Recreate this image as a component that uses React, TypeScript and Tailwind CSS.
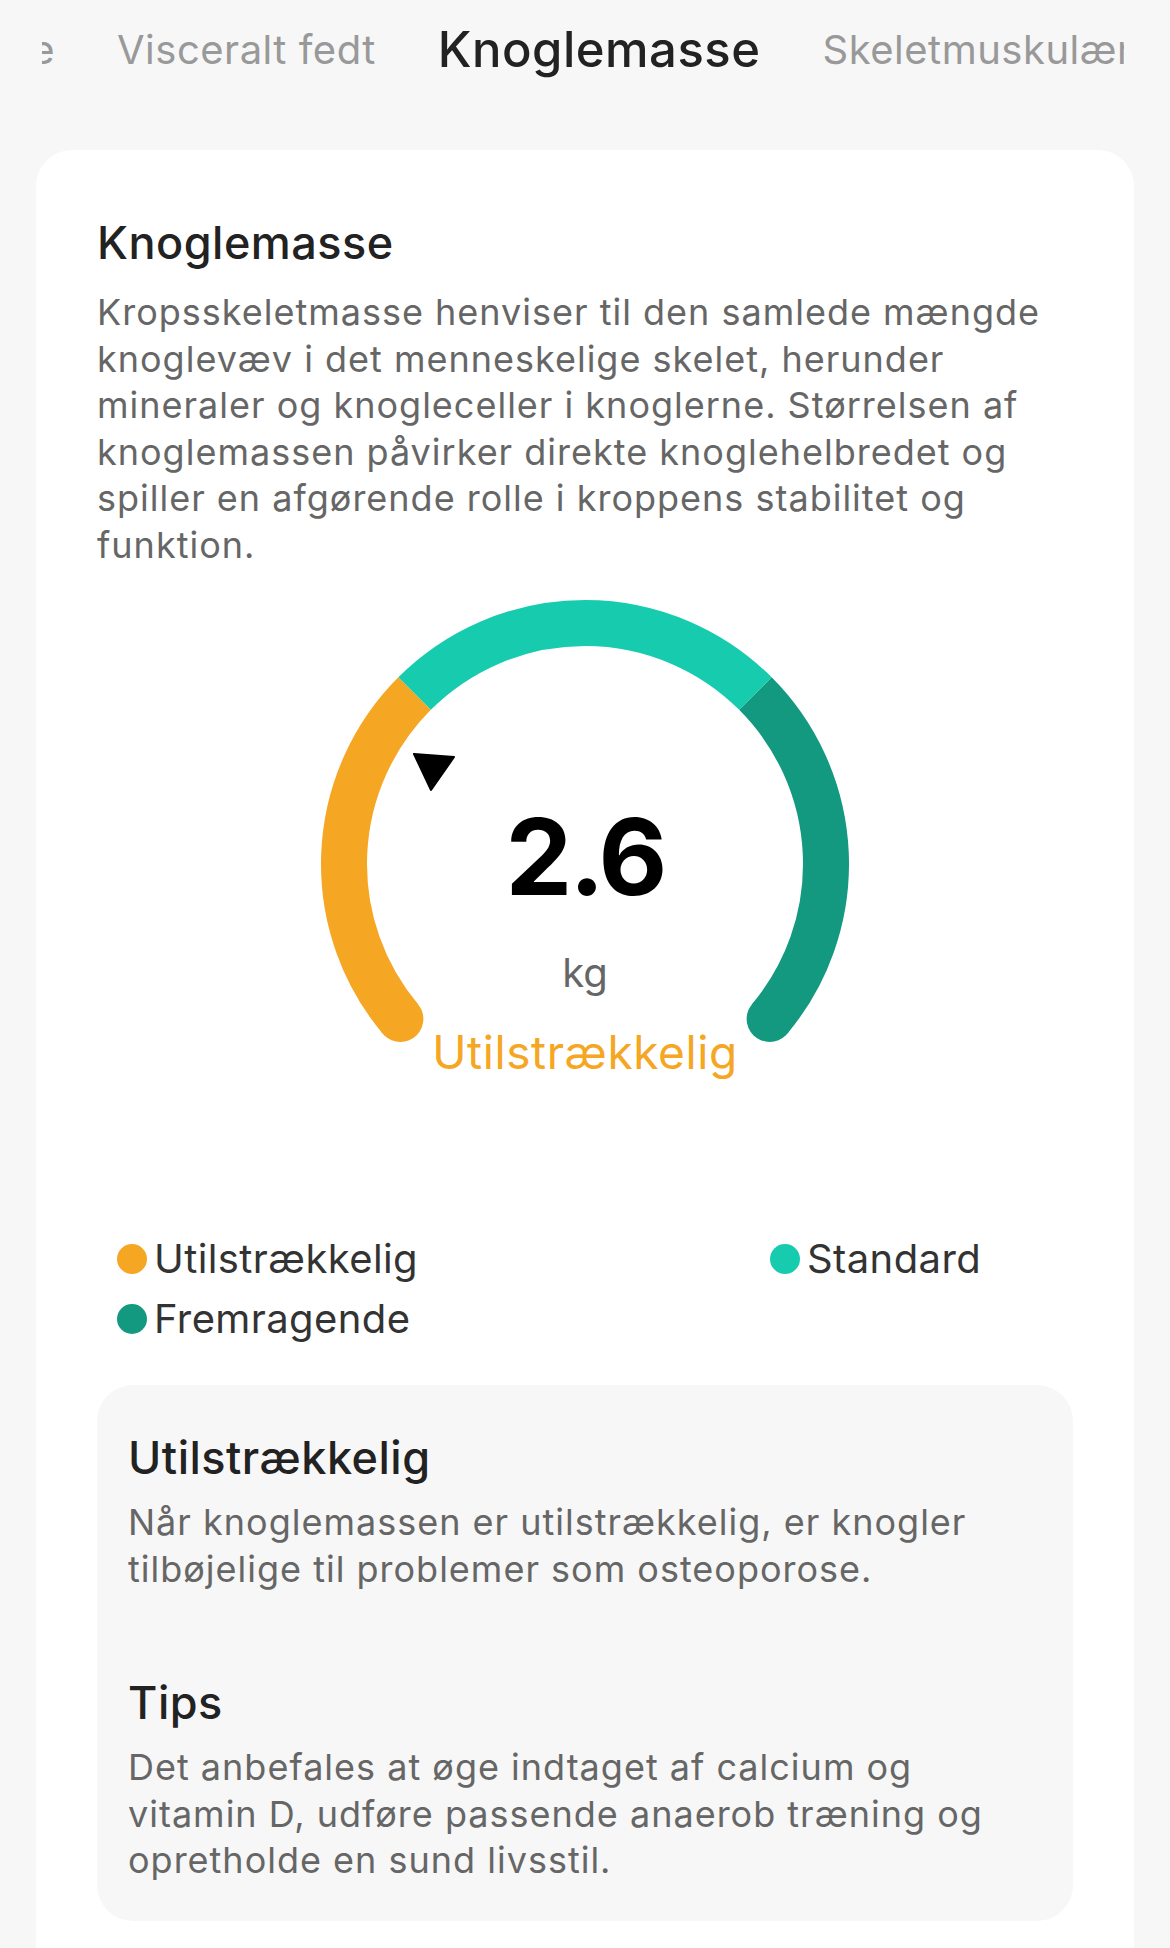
import React from 'react';

const ORANGE = '#F5A623';
const TEAL = '#17CBAE';
const DARK = '#12997F';

// gauge geometry (svg coordinates, 540x540 box)
const C = 270;
const R = 241;
const SW = 46;

function pt(deg: number) {
  const a = (deg * Math.PI) / 180;
  return { x: C + R * Math.cos(a), y: C - R * Math.sin(a) };
}

function arc(from: number, to: number) {
  const a = pt(from);
  const b = pt(to);
  const large = Math.abs(from - to) > 180 ? 1 : 0;
  return `M ${a.x} ${a.y} A ${R} ${R} 0 ${large} 1 ${b.x} ${b.y}`;
}

function Gauge() {
  const start = pt(220);
  const end = pt(-40);
  return (
    <div className="relative mx-auto mt-[26px] h-[540px] w-[540px]">
      <svg className="absolute inset-0" width="540" height="540" viewBox="0 0 540 540">
        <path d={arc(220, 135)} stroke={ORANGE} strokeWidth={SW} fill="none" />
        <path d={arc(45, -40)} stroke={DARK} strokeWidth={SW} fill="none" />
        <path d={arc(135, 45)} stroke={TEAL} strokeWidth={SW} fill="none" />
        <circle cx={start.x} cy={start.y} r={SW / 2} fill={ORANGE} />
        <circle cx={end.x} cy={end.y} r={SW / 2} fill={DARK} />
        <polygon points="99,160 139,163 116,196" fill="#000" stroke="#000" strokeWidth="2" strokeLinejoin="round" />
      </svg>
      <div className="absolute left-0 right-0 top-[205px] text-center text-[106px] font-bold leading-[116px] tracking-[-3px] text-black">
        2.6
      </div>
      <div className="absolute left-0 right-0 top-[356px] text-center text-[40px] leading-[46px] text-[#666666]">
        kg
      </div>
      <div className="absolute left-0 right-0 top-[430px] text-center text-[46px] leading-[56px] tracking-[0.6px] text-[#F5A623]">
        Utilstrækkelig
      </div>
    </div>
  );
}

function LegendItem({ color, label }: { color: string; label: string }) {
  return (
    <div className="flex h-[60px] items-center gap-[7px]">
      <span className="h-[30px] w-[30px] shrink-0 rounded-full" style={{ backgroundColor: color }} />
      <span className="text-[40px] leading-[60px] tracking-[0.4px] text-[#333333]">{label}</span>
    </div>
  );
}

export default function App() {
  return (
    <div
      className="min-h-[1948px] w-[1170px] overflow-hidden bg-[#f7f7f7]"
      style={{ fontFamily: 'Inter, "Noto Sans", sans-serif' }}
    >
      {/* tab strip */}
      <div className="ml-[42px] mr-[46px] h-[100px] overflow-hidden">
        <div className="ml-[-287px] flex h-full items-center gap-[62px] whitespace-nowrap">
          <span className="w-[300px] shrink-0 text-right text-[40px] tracking-[0.5px] text-[#999999]">Muskelmasse</span>
          <span className="shrink-0 text-[40px] tracking-[0.5px] text-[#999999]">Visceralt fedt</span>
          <span className="shrink-0 text-[49px] font-medium tracking-[0.5px] text-[#222222]">Knoglemasse</span>
          <span className="shrink-0 text-[40px] tracking-[0.5px] text-[#999999]">Skeletmuskulære</span>
        </div>
      </div>

      {/* card */}
      <div className="mx-[36px] mt-[50px] rounded-[36px] bg-white px-[61px] pb-[60px] pt-[68px]">
        <h1 className="text-[45px] font-medium leading-[50px] tracking-[0.5px] text-[#222222]">Knoglemasse</h1>
        <p className="mt-[21px] text-[36px] leading-[46.5px] tracking-[1px] text-[#666666]">
          Kropsskeletmasse henviser til den samlede mængde
          <br />
          knoglevæv i det menneskelige skelet, herunder
          <br />
          mineraler og knogleceller i knoglerne. Størrelsen af
          <br />
          knoglemassen påvirker direkte knoglehelbredet og
          <br />
          spiller en afgørende rolle i kroppens stabilitet og
          <br />
          funktion.
        </p>

        <Gauge />

        <div className="mt-[95px] grid grid-cols-[653px_1fr] pl-[20px]">
          <LegendItem color={ORANGE} label="Utilstrækkelig" />
          <LegendItem color={TEAL} label="Standard" />
          <LegendItem color={DARK} label="Fremragende" />
        </div>

        <div className="mt-[36px] rounded-[36px] bg-[#f7f7f7] px-[31px] pb-[37px] pt-[47px]">
          <h2 className="text-[45px] font-medium leading-[52px] tracking-[0.5px] text-[#222222]">Utilstrækkelig</h2>
          <p className="mt-[15px] text-[36px] leading-[46.5px] tracking-[1px] text-[#666666]">
            Når knoglemassen er utilstrækkelig, er knogler
            <br />
            tilbøjelige til problemer som osteoporose.
          </p>
          <h2 className="mt-[85px] text-[45px] font-medium leading-[52px] tracking-[0.5px] text-[#222222]">Tips</h2>
          <p className="mt-[15px] text-[36px] leading-[46.5px] tracking-[1px] text-[#666666]">
            Det anbefales at øge indtaget af calcium og
            <br />
            vitamin D, udføre passende anaerob træning og
            <br />
            opretholde en sund livsstil.
          </p>
        </div>
      </div>
    </div>
  );
}
